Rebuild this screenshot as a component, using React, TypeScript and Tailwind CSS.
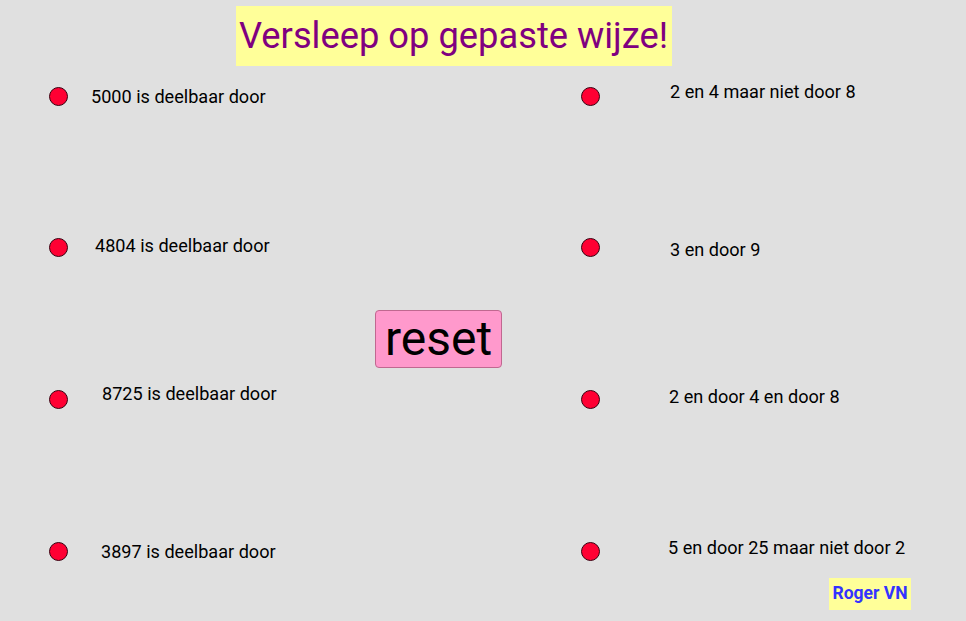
import React from "react";

// GeoGebra-style free canvas: points and labels sit where the author dropped them
const POINTS = [
  { x: 58, y: 96 }, { x: 58, y: 247 }, { x: 58, y: 399 }, { x: 58, y: 551 },
  { x: 590, y: 96 }, { x: 590, y: 247 }, { x: 590, y: 399 }, { x: 590, y: 551 },
];

const LABELS = [
  { x: 91, y: 97, text: "5000 is deelbaar door" },
  { x: 95, y: 246, text: "4804 is deelbaar door" },
  { x: 102, y: 394, text: "8725 is deelbaar door" },
  { x: 101, y: 552, text: "3897 is deelbaar door" },
  { x: 670, y: 92, text: "2 en 4 maar niet door 8" },
  { x: 670, y: 250, text: "3 en door 9" },
  { x: 669, y: 397, text: "2 en door 4 en door 8" },
  { x: 668, y: 548, text: "5 en door 25 maar niet door 2" },
];

export default function App() {
  return (
    <div className="relative w-[966px] h-[621px] overflow-hidden bg-[#e0e0e0] font-['Roboto','Liberation_Sans',sans-serif]">
      <div className="absolute left-[236px] top-[6px] w-[436px] h-[60px] bg-[#ffff99] flex items-center pl-[3px]">
        <span className="text-[36.3px] leading-none text-[#800080] whitespace-nowrap">Versleep op gepaste wijze!</span>
      </div>

      {POINTS.map((p, i) => (
        <div key={i}
          className="absolute w-[19px] h-[19px] -ml-[9.5px] -mt-[9.5px] rounded-full bg-[#ff0033] border border-[#3a0010]"
          style={{ left: p.x, top: p.y }} />
      ))}

      {LABELS.map(l => (
        <div key={l.text}
          className="absolute -translate-y-1/2 text-[18.1px] leading-none text-black whitespace-nowrap"
          style={{ left: l.x, top: l.y }}>
          {l.text}
        </div>
      ))}

      <button className="absolute left-[375px] top-[310px] w-[127px] h-[58px] rounded-[4px] bg-[#ff99cc] border border-[#c06890] flex items-center justify-center">
        <span className="text-[48px] leading-none text-black">reset</span>
      </button>

      <div className="absolute left-[829px] top-[578px] w-[82px] h-[32px] bg-[#ffff99] flex items-center justify-center">
        <span className="text-[17.5px] font-bold leading-none text-[#3333ff]">Roger VN</span>
      </div>
    </div>
  );
}
